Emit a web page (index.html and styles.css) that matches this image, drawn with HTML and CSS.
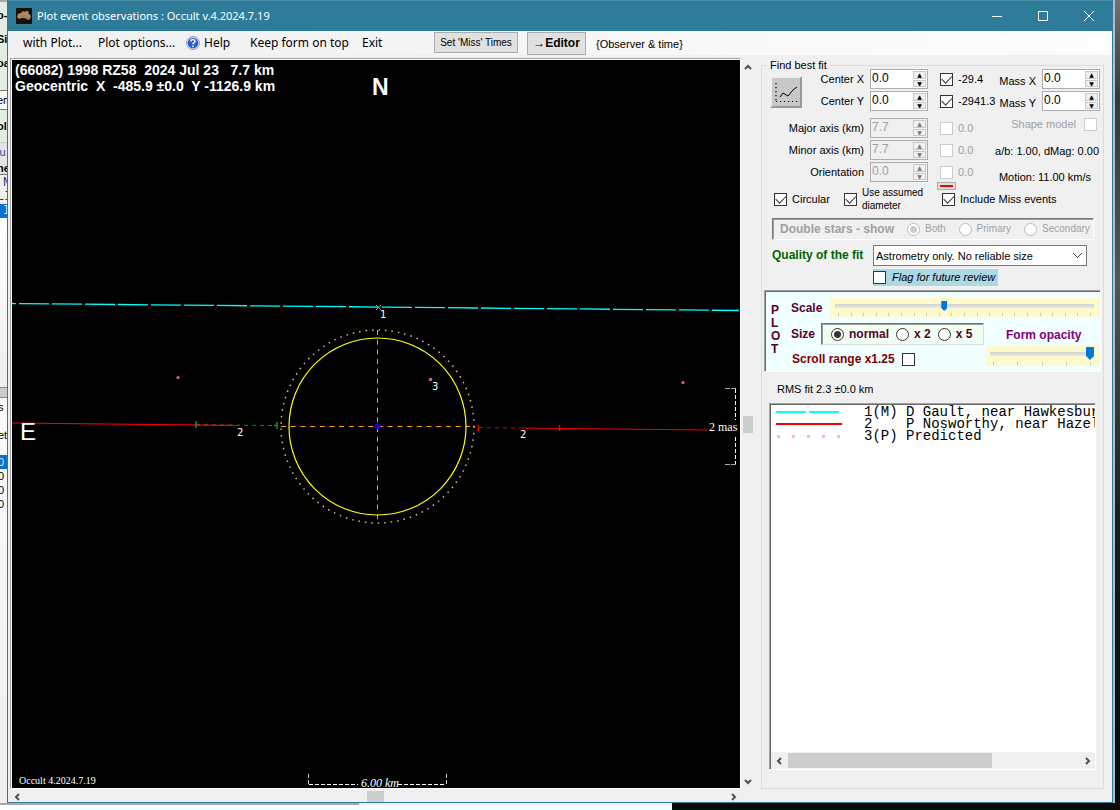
FILE: index.html
```html
<!DOCTYPE html>
<html lang="en">
<head>
<meta charset="utf-8">
<title>Plot event observations : Occult v.4.2024.7.19</title>
<link rel="stylesheet" href="styles.css">
</head>
<body>
<div class="desktop">
  <div class="behind">
    <div class="strip green h-tall"><b>o-</b><b>Si</b><b>oa</b></div>
    <div class="strip cell">em</div>
    <div class="strip green h-mid"><b>ol</b></div>
    <div class="strip grey"><span class="blue">lu</span><b>ne</b></div>
    <div class="strip rows"><span class="navy">N</span><span class="plum">LI</span><span class="picked">I</span></div>
    <div class="strip empty"></div>
    <div class="strip splitter"></div>
    <div class="strip lower"><span>s</span><span>et</span><span class="picked">0</span><span>0</span><span>0</span><span>0</span></div>
  </div>

  <div class="window">
    <header class="titlebar">
      <svg class="app-icon" width="16" height="16" viewBox="0 0 16 16" aria-hidden="true"><rect width="16" height="16" fill="#17110d"/><path d="M1 9 2 6 5 5 7 3 9 4 10 3 12 3 13 6 15 8 14 11 12 12 9 10 6 10 3 11Z" fill="#b38a60"/><path d="M4 9 7 8 10 8 13 11" fill="none" stroke="#9c7650"/></svg>
      <h1 class="title">Plot event observations : Occult v.4.2024.7.19</h1>
      <div class="caption">
        <button class="cap" aria-label="Minimize"><svg width="12" height="12" viewBox="0 0 12 12"><path d="M1 6.500H11" /></svg></button>
        <button class="cap" aria-label="Maximize"><svg width="12" height="12" viewBox="0 0 12 12"><path d="M1.500 1.500H10.500V10.500H1.500Z"/></svg></button>
        <button class="cap" aria-label="Close"><svg width="12" height="12" viewBox="0 0 12 12"><path d="M1 1 11 11M11 1 1 11"/></svg></button>
      </div>
    </header>

    <nav class="menubar">
      <button class="menu m-first">with Plot...</button>
      <button class="menu m-options">Plot options...</button>
      <button class="menu m-help"><svg width="14" height="14" viewBox="0 0 14 14" aria-hidden="true"><circle cx="7" cy="7" r="6.500" fill="#dfe6f5" stroke="#8c9cc4"/><circle cx="7" cy="7" r="5.300" fill="#2a5bd0"/><path d="M5 5.500C5 3 9 3 9 5.300 9 6.800 7 6.600 7 8.300" fill="none" stroke="#fff" stroke-width="1.500"/><circle cx="7" cy="10.300" r=".9" fill="#fff"/></svg>Help</button>
      <button class="menu m-keep">Keep form on top</button>
      <button class="menu m-exit">Exit</button>
      <button class="push miss">Set 'Miss' Times</button>
      <button class="push editor">→Editor</button>
      <span class="observer">{Observer &amp; time}</span>
    </nav>

    <main class="main">
      <section class="plot-area">
        <div class="plot">
          <svg class="canvas" viewBox="12 61 727 727" preserveAspectRatio="xMinYMin meet" role="img" aria-label="Occultation plot">
            <g class="head"><text x="15" y="75">(66082) 1998 RZ58&#160; 2024 Jul 23&#160;&#160; 7.7 km</text><text x="15" y="91">Geocentric&#160; X&#160; -485.9 ±0.0&#160; Y -1126.9 km</text></g>
            <text class="north" x="372" y="95">N</text>
            <path d="M12 303.500 739 310.500" stroke="#00ffff" stroke-width="1.300" stroke-dasharray="30 3" stroke-dashoffset="26"/>
            <path d="M376 305 381 310M381 305 376 310" stroke="#8a9c9c"/>
            <path d="M12 423 235 425.300M520 428 708 430" stroke="#f00000" stroke-width="1.200"/>
            <path d="M196 425 277 425.500" stroke="#228b22" stroke-dasharray="4 4"/>
            <path d="M196 421V428M277 422V429M274 425.500H277" stroke="#228b22" stroke-width="1.500"/>
            <path d="M479 427.500 520 428" stroke="#c00000" stroke-dasharray="4 4"/>
            <path d="M478.500 425V431M559.500 425V431" stroke="#f00000" stroke-width="1.500"/>
            <circle cx="377.500" cy="426.500" r="96.500" stroke="#c8c878" stroke-width="1.500" stroke-dasharray="1.500 5"/>
            <path d="M281 426.500H475M377.500 330V524" stroke="#ffa500" stroke-dasharray="5 4.700"/>
            <circle cx="377.500" cy="426.500" r="88.500" stroke="#ffff00" stroke-width="1.200"/>
            <circle cx="377.500" cy="426.500" r="2" stroke="#0000ff" stroke-width="2"/>
            <g fill="#d85a9c"><circle cx="178" cy="377.500" r="1.600"/><circle cx="430.500" cy="379.500" r="1.800"/><circle cx="683" cy="382.500" r="1.600"/></g>
            <g class="tag"><text x="380" y="318">1</text><text x="432" y="390">3</text><text x="237" y="436">2</text><text x="520" y="438">2</text></g>
            <text class="east" x="20" y="440">E</text>
            <path d="M725 388.500H736M725 464.500H736" stroke="#a8a8a8" stroke-dasharray="5 1"/>
            <path d="M735.500 389V420M735.500 437V464" stroke="#fff" stroke-dasharray="4 2"/>
            <text class="serif mas" x="709" y="431">2 mas</text>
            <path d="M309 784.500H358M398 784.500H446" stroke="#fff" stroke-dasharray="4 2"/>
            <path d="M308.500 774V785M446.500 774V785" stroke="#ccc" stroke-dasharray="4 2"/>
            <text class="serif km" x="361" y="787">6.00 km</text>
            <text class="serif ver" x="19" y="784">Occult 4.2024.7.19</text>
          </svg>
        </div>
        <div class="vscroll" aria-hidden="true">
          <svg width="8" height="6" viewBox="0 0 8 6"><path d="M1 5 4 2 7 5"/></svg>
          <i class="thumb"></i>
          <svg width="8" height="6" viewBox="0 0 8 6"><path d="M1 1 4 4 7 1"/></svg>
        </div>
        <div class="hscroll" aria-hidden="true">
          <svg width="6" height="8" viewBox="0 0 6 8"><path d="M5 1 2 4 5 7"/></svg>
          <i class="thumb"></i>
          <svg width="6" height="8" viewBox="0 0 6 8"><path d="M1 1 4 4 1 7"/></svg>
        </div>
      </section>

      <fieldset class="fit">
        <legend>Find best fit</legend>
        <div class="params">
          <button class="chart-btn" aria-label="Fit"><svg width="26" height="26" viewBox="0 0 26 26"><path d="M3 4V22M3 22.500H25" stroke="#000" stroke-width="1.200" stroke-dasharray="1.200 2.800"/><path d="M7 18 10 14 15 17 20 11 24 8" stroke="#000"/></svg></button>
          <div class="row">
            <label class="name" for="cx">Center X</label>
            <span class="spin"><input id="cx" value="0.0"><span class="arrows"><button aria-label="Up">▲</button><button aria-label="Down">▼</button></span></span>
            <label class="check"><input type="checkbox" checked>-29.4</label>
            <label class="mass" for="mx">Mass X</label>
            <span class="spin"><input id="mx" value="0.0"><span class="arrows"><button aria-label="Up">▲</button><button aria-label="Down">▼</button></span></span>
          </div>
          <div class="row">
            <label class="name" for="cy">Center Y</label>
            <span class="spin"><input id="cy" value="0.0"><span class="arrows"><button aria-label="Up">▲</button><button aria-label="Down">▼</button></span></span>
            <label class="check"><input type="checkbox" checked>-2941.3</label>
            <label class="mass" for="my">Mass Y</label>
            <span class="spin"><input id="my" value="0.0"><span class="arrows"><button aria-label="Up">▲</button><button aria-label="Down">▼</button></span></span>
          </div>
          <div class="row spaced">
            <label class="name" for="major">Major axis (km)</label>
            <span class="spin off"><input id="major" value="7.7" disabled><span class="arrows"><button disabled aria-label="Up">▲</button><button disabled aria-label="Down">▼</button></span></span>
            <label class="check off"><input type="checkbox" disabled>0.0</label>
            <label class="check off shape">Shape model<input type="checkbox" disabled></label>
          </div>
          <div class="row">
            <label class="name" for="minor">Minor axis (km)</label>
            <span class="spin off"><input id="minor" value="7.7" disabled><span class="arrows"><button disabled aria-label="Up">▲</button><button disabled aria-label="Down">▼</button></span></span>
            <label class="check off"><input type="checkbox" disabled>0.0</label>
            <span class="info">a/b: 1.00, dMag: 0.00</span>
          </div>
          <div class="row">
            <label class="name" for="orient">Orientation</label>
            <span class="spin off"><input id="orient" value="0.0" disabled><span class="arrows"><button disabled aria-label="Up">▲</button><button disabled aria-label="Down">▼</button></span></span>
            <label class="check off"><input type="checkbox" disabled>0.0</label>
            <span class="info motion">Motion: 11.00 km/s</span>
          </div>
        </div>

        <div class="options">
          <label class="check"><input type="checkbox" checked>Circular</label>
          <label class="check assumed"><input type="checkbox" checked><span>Use assumed<br>diameter</span></label>
          <div class="misses">
            <button class="swatch" aria-label="Line colour"></button>
            <label class="check"><input type="checkbox" checked>Include Miss events</label>
          </div>
        </div>

        <div class="doubles">
          <b>Double stars - show</b>
          <label class="radio"><input type="radio" name="star" checked disabled>Both</label>
          <label class="radio"><input type="radio" name="star" disabled>Primary</label>
          <label class="radio"><input type="radio" name="star" disabled>Secondary</label>
        </div>

        <div class="quality">
          <label for="quality">Quality of the fit</label>
          <div class="quality-fields">
            <select id="quality"><option>Astrometry only. No reliable size</option></select>
            <label class="flag"><input type="checkbox">Flag for future review</label>
          </div>
        </div>

        <div class="plot-box">
          <div class="letters"><span>P</span><span>L</span><span>O</span><span>T</span></div>
          <div class="plot-rows">
            <div class="scale-row">
              <label for="scale">Scale</label>
              <div class="slider"><input id="scale" type="range" min="0" max="100" value="42"><div class="ticks"><i></i><i></i><i></i><i></i><i></i><i></i><i></i><i></i><i></i><i></i><i></i><i></i><i></i><i></i><i></i><i></i><i></i><i></i><i></i><i></i><i></i></div></div>
            </div>
            <div class="lower-rows">
              <div class="left-col">
                <div class="size-row"><span>Size</span>
                  <div class="sizes">
                    <label class="radio"><input type="radio" name="size" checked>normal</label>
                    <label class="radio"><input type="radio" name="size">x 2</label>
                    <label class="radio"><input type="radio" name="size">x 5</label>
                  </div>
                </div>
                <label class="range-check">Scroll range x1.25<input type="checkbox"></label>
              </div>
              <div class="opacity">
                <label for="opacity">Form opacity</label>
                <div class="slider big"><input id="opacity" type="range" min="0" max="100" value="100"><div class="ticks"><i></i><i></i><i></i><i></i><i></i></div></div>
              </div>
            </div>
          </div>
        </div>

        <p class="rms">RMS fit 2.3 ±0.0 km</p>

        <div class="list">
          <ul>
            <li><svg width="66" height="12" viewBox="0 0 66 12"><path d="M0 6H30M33 6H63" stroke="#00ffff" stroke-width="2"/></svg><span>1(M)&nbsp;D Gault, near Hawkesbur</span></li>
            <li><svg width="66" height="12" viewBox="0 0 66 12"><path d="M0 6H66" stroke="#ff0000" stroke-width="2"/></svg><span>2&nbsp;&nbsp;&nbsp;&nbsp;P Nosworthy, near Hazel</span></li>
            <li><svg width="66" height="12" viewBox="0 0 66 12"><g fill="none" stroke="#ff69b4"><circle cx="2.500" cy="6.500" r="1"/><circle cx="17.500" cy="6.500" r="1"/><circle cx="32.500" cy="6.500" r="1"/><circle cx="47.500" cy="6.500" r="1"/><circle cx="62.500" cy="6.500" r="1"/></g></svg><span>3(P)&nbsp;Predicted</span></li>
          </ul>
          <div class="list-scroll" aria-hidden="true">
            <svg width="6" height="8" viewBox="0 0 6 8"><path d="M5 1 2 4 5 7"/></svg>
            <div class="track"><i class="thumb"></i></div>
            <svg width="6" height="8" viewBox="0 0 6 8"><path d="M1 1 4 4 1 7"/></svg>
          </div>
        </div>
      </fieldset>
    </main>
  </div>
  <div class="right-edge"></div>
  <div class="bottom-edge"></div>
</div>
</body>
</html>
```
FILE: styles.css
```css
* { box-sizing: border-box; }
body { margin: 0; font: 12px/14px "Liberation Sans", Arial, sans-serif; color: #000; background: #0a0a0a; }
button, input, select { font: inherit; color: inherit; margin: 0; }
button { padding: 0; border: 0; background: none; }
.desktop { display: grid; grid-template: minmax(0, 1fr) 7px / 7px minmax(0, 1fr) 7px; height: 100vh; overflow: hidden; }

/* slivers of the windows behind */
.behind { overflow: hidden; display: flex; flex-direction: column; background: #f0f0f0; white-space: nowrap; font-size: 11px; text-indent: -3px; }
.strip { display: flex; flex-direction: column; flex: none; overflow: hidden; }
.strip > * { line-height: 14px; }
.green { background: #e1eee1; }
.h-tall { height: 90px; padding-top: 6px; gap: 10px; border-top: 2px solid #aaa; }
.cell { height: 20px; border: solid #777; border-width: 1px 0; background: #f8f8f8; line-height: 18px; }
.h-mid { height: 33px; padding-top: 9px; border-bottom: 1px solid #ccc; }
.grey { height: 32px; padding-top: 2px; gap: 2px; background: #e4e4e4; border-bottom: 1px solid #777; }
.rows { height: 43px; padding-top: 1px; font: 12px "Liberation Mono", monospace; }
.rows .navy, .rows .picked { text-indent: 3px; }
.blue { color: #2750a8; }
.navy { color: #203878; }
.plum { color: #702050; }
.picked { background: #0a70cc; color: #d8ecff; }
.empty { height: 169px; background: linear-gradient(#fff, #eee); }
.splitter { height: 11px; border: solid #888; border-width: 1px 0; background: #ccc; }
.lower { flex: 1; padding-top: 2px; text-indent: -2px; background: linear-gradient(#fafafa, #efefef); }
.lower span:nth-child(2) { margin: 14px 0 13px; }
.right-edge { border-left: 2px solid #b8bcbe; background: linear-gradient(#707070, #383838 12%, #555 35%, #1c1c1c 65%, #0a0a0a); }
.bottom-edge { grid-column: 1 / -1; background: linear-gradient(90deg, #aaa 359px, #eee 359px 672px, #0a0a0a 672px); border-bottom: 5px solid #fff; border-image: linear-gradient(90deg, #fff 672px, #0a0a0a 672px) 1; }

.window { display: flex; flex-direction: column; border: 1px solid #2e7c9a; border-top: 0; background: #f0f0f0; min-width: 0; }
.titlebar { display: flex; align-items: center; height: 31px; flex: none; padding-left: 8px; gap: 5px; background: #2e7c9a; border-top: 1px solid #468aa5; color: #fff; }
.title { margin: 0; font: 11px/18px "Noto Sans", sans-serif; flex: 1; }
.caption { display: flex; }
.cap { width: 46px; height: 30px; display: grid; place-items: center; }
.cap svg { fill: none; stroke: #fff; }

.menubar { display: flex; align-items: center; height: 24px; flex: none; background: linear-gradient(90deg, #f0f0f0, #fdfdfd); font: 12px/18px "Noto Sans", sans-serif; white-space: nowrap; }
.menu { text-align: left; flex: none; }
.m-first { padding-left: 15px; width: 90px; }
.m-options { width: 88px; }
.m-help { width: 64px; display: flex; gap: 4px; align-items: center; }
.m-keep { width: 112px; }
.m-exit { width: 72px; }
.push { border: 1px solid #adadad; background: #e1e1e1; font-family: "Liberation Sans", Arial, sans-serif; }
.miss { width: 84px; height: 21px; font-size: 10px; align-self: start; margin-top: 1px; }
.editor { width: 59px; height: 23px; margin-left: 9px; font-size: 12px; font-weight: bold; }
.observer { margin-left: 7px; padding: 3px 3px 0; font: 11px/13px "Liberation Sans", Arial, sans-serif; }

.main { flex: 1; min-height: 0; display: grid; grid-template-columns: minmax(0, 1fr) 343px; gap: 6px; padding: 3px 8px 0 2px; }
.plot-area { display: grid; grid-template: minmax(0, 1fr) 13px / minmax(0, 1fr) 14px; min-height: 0; }
.plot { background: #000; border: 1px solid #a0a0a0; border-right-color: #fff; border-bottom-color: #fff; box-shadow: inset 1px 1px #fff; min-height: 0; padding: 2px 0 0 1px; }
.canvas { display: block; width: 100%; height: 100%; fill: none; }
.canvas text { fill: #fff; }
.head { font: bold 14px "Liberation Sans", Arial, sans-serif; }
.north { font: bold 23px "Liberation Sans", Arial, sans-serif; }
.east { font: 24px "Liberation Sans", Arial, sans-serif; }
.tag { font: 10px "DejaVu Sans", sans-serif; }
.serif { font-family: "Liberation Serif", "Times New Roman", serif; }
.mas { font-size: 12px; }
.km { font-size: 12px; font-style: italic; }
.ver { font-size: 10px; }
.vscroll, .hscroll, .list-scroll { display: flex; align-items: center; justify-content: space-between; background: #f0f0f0; }
.vscroll { flex-direction: column; padding: 6px 0 4px; }
.vscroll svg, .hscroll svg, .list-scroll svg { fill: none; stroke: #505050; stroke-width: 2; flex: none; }
.thumb { background: #cdcdcd; }
.vscroll .thumb { width: 10px; height: 17px; }
.hscroll { padding: 2px 4px 0 4px; }
.hscroll .thumb { width: 17px; height: 11px; }

.fit { min-width: 0; margin: 0 0 13px; padding: 0 2px; border: 1px solid #dcdcdc; display: flex; flex-direction: column; }
.fit legend { margin-left: 3px; padding: 0 3px; font-size: 11px; line-height: 14px; }
.params { position: relative; display: grid; gap: 2px; font-size: 11px; margin-top: -3px; }
.chart-btn { position: absolute; left: 6px; top: 7px; width: 32px; height: 32px; background: #c8c8c8; border: 2px outset #eee; display: grid; place-items: center; }
.chart-btn svg { fill: none; }
.row { display: grid; grid-template: 20px / 100px 58px 60px 36px 58px; column-gap: 6px; align-items: center; height: 20px; }
.row > * { grid-row: 1; }
.row > .name { grid-column: 1; }
.row > .spin { grid-column: 2; }
.row > .check { grid-column: 3; margin-left: 6px; }
.row > .mass { grid-column: 4; padding-top: 4px; }
.row > .mass + .spin { grid-column: 5; }
.row > .shape { grid-column: 4 / 6; justify-self: end; gap: 8px; margin: 0 3px 8px 0; }
.row > .info { grid-column: 3 / 6; justify-self: end; white-space: nowrap; padding: 2px 1px 0 0; }
.row > .motion { padding: 9px 9px 0 0; }
.spaced { margin-top: 5px; }
.name { text-align: right; }
.mass { white-space: nowrap; justify-self: end; }
.spin { display: flex; height: 20px; background: #fff; border: 1px solid #abadb3; }
.spin input { width: 40px; flex: 1; min-width: 0; border: 0; padding: 0 1px 2px; background: none; font-size: 12px; }
.arrows { display: grid; width: 15px; grid-template-rows: 1fr 1fr; padding: 1px; gap: 1px; }
.arrows button { background: #f0f0f0; border: 1px solid #c8c8c8; font: 6px/6px "DejaVu Sans", sans-serif; overflow: hidden; }
.off { color: #a0a0a0; background: none; }
.off .arrows button { color: #777; }
.check { display: flex; align-items: center; gap: 5px; white-space: nowrap; }
input[type=checkbox] { appearance: none; flex: none; width: 13px; height: 13px; border: 1px solid #333; background: #fff; display: grid; place-items: center; }
input[type=checkbox]:checked::after { content: ""; width: 9px; height: 5px; border: solid #333; border-width: 0 0 1px 1px; transform: translateY(-1px) rotate(-45deg); }
input[type=checkbox]:disabled { border-color: #ccc; }

.options { display: grid; grid-template-columns: 70px 93px 1fr; align-items: end; padding-left: 10px; height: 30px; font-size: 11px; line-height: 13px; }
.options .check { height: 26px; }
.assumed { font-size: 10px; }
.misses { display: flex; flex-direction: column; }
.misses .check { margin: -4px 0 0 5px; }
.swatch { position: relative; width: 19px; height: 8px; border: 1px solid #adadad; background: #e1e1e1; display: block; }
.swatch::after { content: ""; display: block; height: 2px; margin: 0 2px; background: #f00; }

.doubles { display: flex; align-items: center; margin: 6px 7px 0 8px; height: 22px; padding-left: 7px; border: 1px solid; border-color: #777 #fff #fff #777; box-shadow: inset 1px 1px #a0a0a0; color: #a0a0a0; font-size: 10px; gap: 13px; white-space: nowrap; }
.doubles b { font-size: 12px; }
.radio { display: flex; align-items: center; gap: 5px; }
input[type=radio] { appearance: none; flex: none; width: 13px; height: 13px; border: 1px solid #333; border-radius: 50%; background: #fff; }
input[type=radio]:checked { background: radial-gradient(circle, #333 3px, #fff 4px); }
input[type=radio]:disabled { border-color: #bbb; }
input[type=radio]:checked:disabled { background: radial-gradient(circle, #ccc 3px, #fff 4px); }

.quality { display: grid; grid-template-columns: 101px 1fr; margin: 5px 14px 0 8px; line-height: 21px; }
.quality > label { font-weight: bold; color: #006400; font-size: 12px; white-space: nowrap; }
.quality-fields { display: flex; flex-direction: column; gap: 3px; font-size: 11px; align-items: start; }
.quality select { appearance: none; width: 100%; height: 21px; border: 1px solid #777; border-radius: 0; padding: 0 2px; background: linear-gradient(45deg, transparent 45%, #444 45% 55%, transparent 55%) right 8px center / 5px 5px no-repeat, linear-gradient(-45deg, transparent 45%, #444 45% 55%, transparent 55%) right 4px center / 5px 5px no-repeat, #fff; }
.flag { display: flex; align-items: center; gap: 6px; height: 17px; padding-right: 3px; background: #add8e6; font-style: italic; }

.plot-box { display: flex; height: 82px; margin-top: 4px; border: 1px solid; border-color: #a0a0a0 #fff #fff #a0a0a0; box-shadow: inset 1px 1px #696969; background: #f0ffff; font-weight: bold; color: #580030; }
.letters { display: flex; flex-direction: column; width: 26px; padding: 13px 0 0 6px; line-height: 13px; }
.plot-rows { flex: 1; min-width: 0; padding-top: 7px; }
.scale-row { display: flex; align-items: center; }
.scale-row > label { width: 39px; }
.slider { flex: 1; background: #fffacd; height: 19px; padding: 3px 6px 0 5px; }
.slider input { appearance: none; display: block; width: 100%; height: 10px; background: linear-gradient(#d2d2d2, #e7eaea) center / 100% 4px no-repeat; }
.slider input::-webkit-slider-thumb { appearance: none; width: 6px; height: 10px; background: #0078d7; clip-path: polygon(0 0, 100% 0, 100% 70%, 50% 100%, 0 70%); }
.ticks { display: flex; justify-content: space-between; padding: 0 3px; margin-top: 2px; }
.ticks i { width: 1px; height: 3px; background: #c4c4c4; }
.big { height: 21px; padding-top: 2px; flex: none; }
.slider.big input { height: 13px; }
.slider.big input::-webkit-slider-thumb { width: 8px; height: 13px; }
.lower-rows { display: flex; justify-content: space-between; padding-top: 6px; }
.size-row { display: flex; align-items: center; }
.size-row > span { width: 30px; }
.sizes { display: flex; gap: 7px; width: 163px; height: 22px; padding-left: 9px; background: #f0fff0; border: 1px solid; border-color: #777 #ddd #ddd #777; box-shadow: inset 1px 1px #999; }
.range-check { display: flex; gap: 7px; align-items: center; padding: 7px 0 0 1px; color: #800000; }
.opacity { width: 115px; display: flex; flex-direction: column; padding-top: 5px; gap: 3px; color: #800080; }
.opacity label { padding-left: 21px; white-space: nowrap; }

.rms { margin: 10px 0 7px 13px; font-size: 11px; line-height: 14px; }
.list { flex: 1; min-height: 0; margin: 0 5px 18px 5px; display: flex; flex-direction: column; background: #fff; border: 1px solid; border-color: #a0a0a0 #fff #fff #a0a0a0; box-shadow: inset 1px 1px #696969; overflow: hidden; }
.list ul { flex: 1; margin: 0; padding: 2px 0 0 6px; list-style: none; font: 14px/12px "Liberation Mono", "Courier New", monospace; overflow: hidden; }
.list li { display: flex; gap: 22px; height: 12px; white-space: nowrap; }
.list li svg { flex: none; }
.list-scroll { height: 17px; flex: none; margin-left: 1px; padding: 0 4px 0 5px; gap: 6px; }
.track { flex: 1; }
.track .thumb { display: block; width: 70%; height: 15px; }
```
